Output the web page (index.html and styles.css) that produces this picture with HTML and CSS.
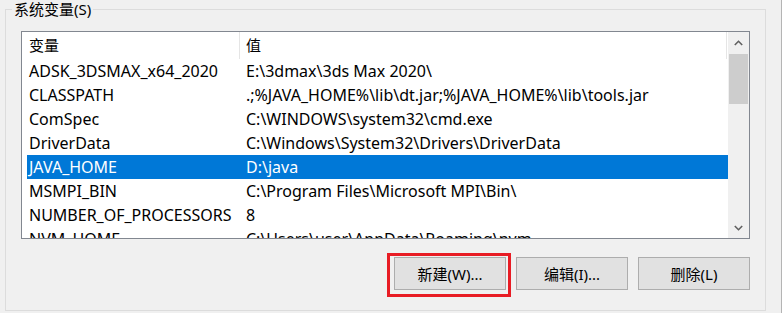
FILE: index.html
```html
<!DOCTYPE html>
<html lang="zh-CN">
<head>
    <meta charset="UTF-8">
    <title>环境变量</title>
    <link rel="stylesheet" href="styles.css">
</head>
<body>
<!--窗口-->
<div class="window">
    <!--系统变量分组-->
    <fieldset class="group">
        <legend>系统变量(S)</legend>
        <!--变量列表-->
        <div class="list">
            <div class="list-view">
                <div class="list-head">
                    <span class="col-name">变量</span>
                    <span class="col-value">值</span>
                </div>
                <ul class="list-body">
                    <li><span class="col-name">ADSK_3DSMAX_x64_2020</span><span class="col-value">E:\3dmax\3ds Max 2020\</span></li>
                    <li><span class="col-name">CLASSPATH</span><span class="col-value">.;%JAVA_HOME%\lib\dt.jar;%JAVA_HOME%\lib\tools.jar</span></li>
                    <li><span class="col-name">ComSpec</span><span class="col-value">C:\WINDOWS\system32\cmd.exe</span></li>
                    <li><span class="col-name">DriverData</span><span class="col-value">C:\Windows\System32\Drivers\DriverData</span></li>
                    <li class="active"><span class="col-name">JAVA_HOME</span><span class="col-value">D:\java</span></li>
                    <li><span class="col-name">MSMPI_BIN</span><span class="col-value">C:\Program Files\Microsoft MPI\Bin\</span></li>
                    <li><span class="col-name">NUMBER_OF_PROCESSORS</span><span class="col-value">8</span></li>
                    <li><span class="col-name">NVM_HOME</span><span class="col-value">C:\Users\user\AppData\Roaming\nvm</span></li>
                </ul>
            </div>
            <!--滚动条-->
            <div class="scrollbar">
                <div class="arrow">
                    <svg width="9" height="6" viewBox="0 0 9 6"><polyline points="0.8,5 4.5,1.3 8.2,5" fill="none" stroke="#606060" stroke-width="1.6"/></svg>
                </div>
                <div class="thumb"></div>
                <div class="track"></div>
                <div class="arrow">
                    <svg width="9" height="6" viewBox="0 0 9 6"><polyline points="0.8,1 4.5,4.7 8.2,1" fill="none" stroke="#606060" stroke-width="1.6"/></svg>
                </div>
            </div>
        </div>
        <!--按钮-->
        <div class="btn-row">
            <button class="btn mark">新建(W)...</button>
            <button class="btn">编辑(I)...</button>
            <button class="btn">删除(L)</button>
        </div>
    </fieldset>
</div>
</body>
</html>
```

FILE: styles.css
```css
*{
    margin: 0;
    padding: 0;
    box-sizing: border-box;
}
ul{
    list-style: none;
}
body{
    background-color: #f0f0f0;
    font-family: "Noto Sans", "Noto Sans CJK SC", sans-serif;
    font-size: 15px;
    color: #000;
}
.window{
    width: 782px;
    height: 313px;
    padding-left: 5px;
    border-right: 1px solid #b4b4b4;
}
.group{
    width: 761px;
    border: 1px solid #dcdcdc;
    padding: 12px 15px 20px 15px;
}
.group legend{
    line-height: 19px;
    padding: 0 2px;
    margin-left: -9px;
}
.list{
    height: 208px;
    border: 1px solid #828790;
    background-color: #fff;
    display: flex;
}
.list-view{
    flex: 1;
    overflow: hidden;
}
.list-head{
    height: 27px;
    display: flex;
    line-height: 27px;
}
.list-head .col-name{
    width: 218px;
    padding-left: 7px;
    border-right: 1px solid #e5e5e5;
}
.list-head .col-value{
    width: 487px;
    padding-left: 6px;
    border-right: 1px solid #e5e5e5;
}
.list-body li{
    height: 24px;
    line-height: 24px;
    margin-left: 5px;
    display: flex;
    white-space: nowrap;
    font-size: 16px;
}
.list-body .col-name{
    width: 213px;
    padding-left: 2px;
}
.list-body .col-value{
    padding-left: 6px;
}
.list-body li.active{
    background-color: #0078d7;
    color: #fff;
}
.scrollbar{
    width: 21px;
    background-color: #f0f0f0;
    display: flex;
    flex-direction: column;
}
.scrollbar .arrow{
    height: 21px;
    display: flex;
    align-items: center;
    justify-content: center;
}
.scrollbar .thumb{
    height: 50px;
    margin: 1px 1px 0 1px;
    background-color: #cdcdcd;
}
.scrollbar .track{
    flex: 1;
}
.btn-row{
    margin-top: 18px;
    display: flex;
    justify-content: flex-end;
    gap: 10px;
}
.btn{
    width: 112px;
    height: 33px;
    border: 1px solid #adadad;
    background-color: #e1e1e1;
    font-family: "Noto Sans", "Noto Sans CJK SC", sans-serif;
    font-size: 15px;
    color: #000;
}
.mark{
    position: relative;
}
.mark::after{
    content: "";
    position: absolute;
    left: -8px;
    top: -5px;
    right: -6px;
    bottom: -8px;
    border: 3px solid #e81c24;
}
```
